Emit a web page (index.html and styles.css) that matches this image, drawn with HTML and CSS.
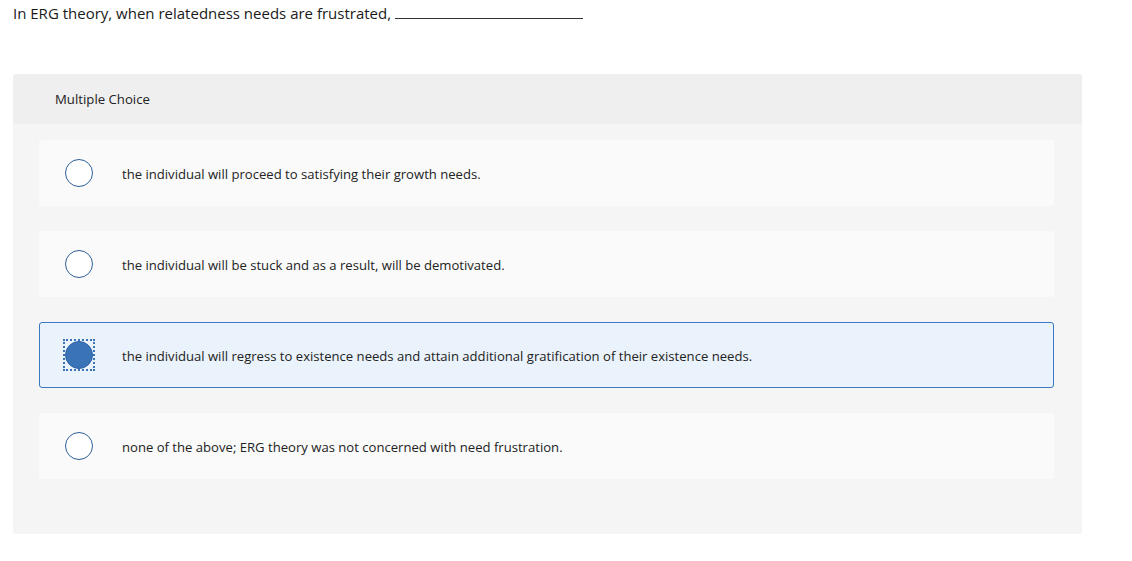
FILE: index.html
```html
<!DOCTYPE html>
<html>
<head>
  <link rel="stylesheet" href="styles.css">
</head>
<body>
  <p class="prompt">In ERG theory, when relatedness needs are frustrated, <span class="blank"></span></p>

  <div class="question">
    <div class="question-header">Multiple Choice</div>
    <div class="choices">
      <label class="choice">
        <span class="radio-wrap"><span class="radio"></span></span>
        <span class="choice-text">the individual will proceed to satisfying their growth needs.</span>
      </label>
      <label class="choice">
        <span class="radio-wrap"><span class="radio"></span></span>
        <span class="choice-text">the individual will be stuck and as a result, will be demotivated.</span>
      </label>
      <label class="choice selected">
        <span class="radio-wrap"><span class="radio"></span></span>
        <span class="choice-text">the individual will regress to existence needs and attain additional gratification of their existence needs.</span>
      </label>
      <label class="choice">
        <span class="radio-wrap"><span class="radio"></span></span>
        <span class="choice-text">none of the above; ERG theory was not concerned with need frustration.</span>
      </label>
    </div>
  </div>
</body>
</html>
```

FILE: styles.css
```css
body {
  font-family: "Open Sans", Lato, sans-serif;
  color: #222;
  background: #fff;
  margin: 0;
  padding: 0 50px 0 13px;
}

.prompt {
  margin: 4px 0 0;
  font-size: 15px;
  line-height: 18px;
  color: #1a1a1a;
}

.blank {
  display: inline-block;
  width: 188px;
  border-bottom: 1px solid #333;
  vertical-align: baseline;
}

.question {
  margin-top: 52px;
  width: 1069px;
  background: #f5f5f5;
  border-radius: 3px;
  padding-bottom: 55px;
}

.question-header {
  height: 50px;
  display: flex;
  align-items: center;
  padding-left: 42px;
  background: #efefef;
  font-size: 13.2px;
  border-radius: 3px 3px 0 0;
}

.choices {
  display: flex;
  flex-direction: column;
  gap: 25px;
  padding: 16px 28px 0 26px;
}

.choice {
  display: flex;
  align-items: center;
  height: 66px;
  box-sizing: border-box;
  padding-left: 23px;
  background: #fafafa;
  border: 1px solid transparent;
  border-radius: 3px;
  cursor: pointer;
}

.radio-wrap {
  display: flex;
  border: 2px dotted transparent;
  flex-shrink: 0;
  margin-right: 27px;
}

.radio {
  width: 28px;
  height: 28px;
  box-sizing: border-box;
  border: 1px solid #2c5f99;
  border-radius: 50%;
  background: #fff;
}

.choice-text {
  font-size: 13.1px;
  padding-top: 1px;
}

.choice.selected {
  background: #eaf2fb;
  border-color: #3a78c1;
}

.choice.selected .radio-wrap {
  border-color: #3b73b9;
}

.choice.selected .radio {
  background: #3b73b9;
  border-color: #2d63a5;
}
```
